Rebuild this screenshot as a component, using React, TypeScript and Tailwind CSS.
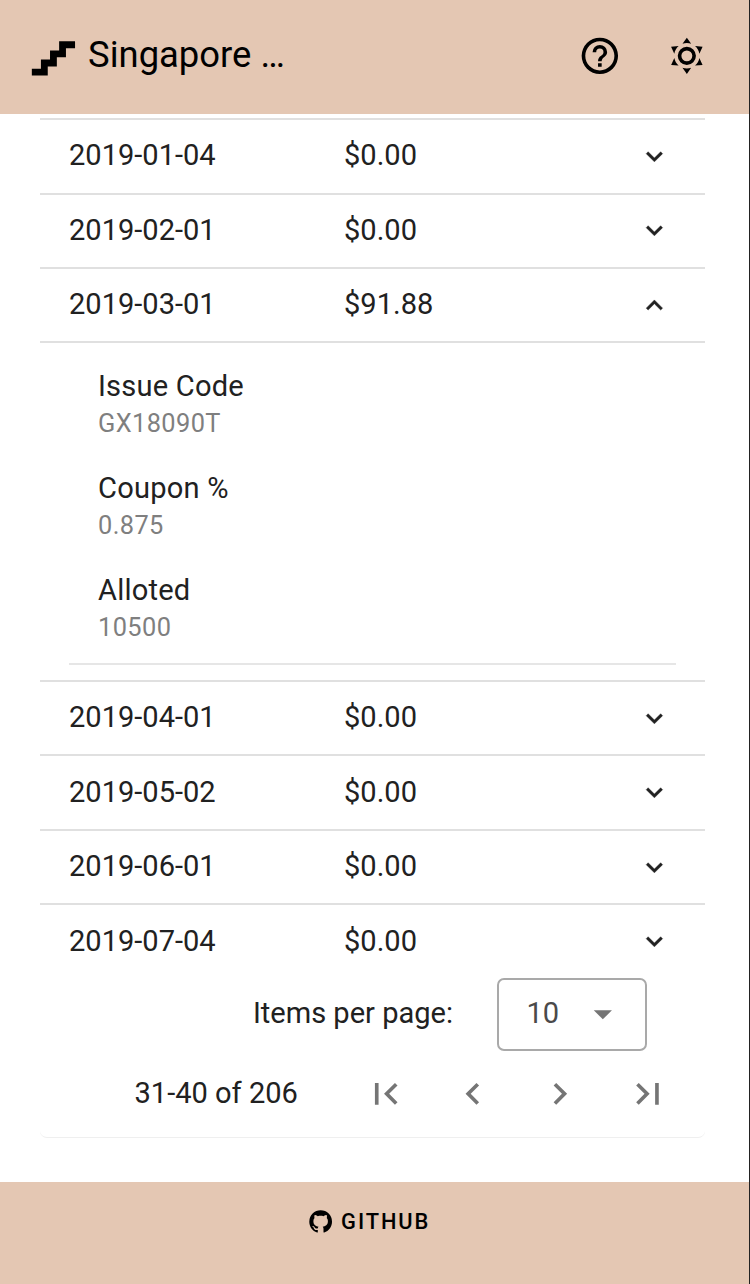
import React from "react";

const icons = {
  stairs: "M15,5V9H11V13H7V17H3V20H10V16H14V12H18V8H22V5H15Z",
  help: "M11,18H13V16H11V18M12,2A10,10 0 0,0 2,12A10,10 0 0,0 12,22A10,10 0 0,0 22,12A10,10 0 0,0 12,2M12,20C7.59,20 4,16.41 4,12C4,7.59 7.59,4 12,4C16.41,4 20,7.59 20,12C20,16.41 16.41,20 12,20M12,6A4,4 0 0,0 8,10H10A2,2 0 0,1 12,8A2,2 0 0,1 14,10C14,12 11,11.75 11,15H13C13,12.75 16,12.5 16,10A4,4 0 0,0 12,6Z",
  sun: "M12,7A5,5 0 0,1 17,12A5,5 0 0,1 12,17A5,5 0 0,1 7,12A5,5 0 0,1 12,7M12,9A3,3 0 0,0 9,12A3,3 0 0,0 12,15A3,3 0 0,0 15,12A3,3 0 0,0 12,9M12,2L14.39,5.42C13.65,5.15 12.84,5 12,5C11.16,5 10.35,5.15 9.61,5.42L12,2M3.34,7L7.5,6.65C6.9,7.16 6.36,7.78 5.94,8.5C5.5,9.24 5.25,10 5.11,10.79L3.34,7M3.36,17L5.12,13.23C5.26,14 5.53,14.78 5.95,15.5C6.37,16.24 6.91,16.86 7.5,17.37L3.36,17M20.65,7L18.88,10.79C18.74,10 18.47,9.23 18.05,8.5C17.63,7.78 17.1,7.15 16.5,6.64L20.65,7M20.64,17L16.5,17.36C17.09,16.85 17.62,16.22 18.04,15.5C18.46,14.77 18.73,14 18.87,13.21L20.64,17M12,22L9.59,18.56C10.33,18.83 11.14,19 12,19C12.82,19 13.63,18.83 14.37,18.56L12,22Z",
  down: "M7.41,8.58L12,13.17L16.59,8.58L18,10L12,16L6,10L7.41,8.58Z",
  up: "M7.41,15.41L12,10.83L16.59,15.41L18,14L12,8L6,14L7.41,15.41Z",
  first: "M18.41,16.59L13.82,12L18.41,7.41L17,6L11,12L17,18L18.41,16.59M6,6H8V18H6V6Z",
  prev: "M15.41,16.58L10.83,12L15.41,7.41L14,6L8,12L14,18L15.41,16.58Z",
  next: "M8.59,16.58L13.17,12L8.59,7.41L10,6L16,12L10,18L8.59,16.58Z",
  last: "M5.59,7.41L10.18,12L5.59,16.59L7,18L13,12L7,6L5.59,7.41M16,6H18V18H16V6Z",
  menu: "M7,10L12,15L17,10H7Z",
  github: "M12,2A10,10 0 0,0 2,12C2,16.42 4.87,20.17 8.84,21.5C9.34,21.58 9.5,21.27 9.5,21C9.5,20.77 9.5,20.14 9.5,19.31C6.73,19.91 6.14,17.97 6.14,17.97C5.68,16.81 5.03,16.5 5.03,16.5C4.12,15.88 5.1,15.9 5.1,15.9C6.1,15.97 6.63,16.93 6.63,16.93C7.5,18.45 8.97,18 9.54,17.76C9.63,17.11 9.89,16.67 10.17,16.42C7.95,16.17 5.62,15.31 5.62,11.5C5.62,10.39 6,9.5 6.65,8.79C6.55,8.54 6.2,7.5 6.75,6.15C6.75,6.15 7.59,5.88 9.5,7.17C10.29,6.95 11.15,6.84 12,6.84C12.85,6.84 13.71,6.95 14.5,7.17C16.41,5.88 17.25,6.15 17.25,6.15C17.8,7.5 17.45,8.54 17.35,8.79C18,9.5 18.38,10.39 18.38,11.5C18.38,15.32 16.04,16.16 13.81,16.41C14.17,16.72 14.5,17.33 14.5,18.26C14.5,19.6 14.5,20.68 14.5,21C14.5,21.27 14.66,21.59 15.17,21.5C19.14,20.16 22,16.42 22,12A10,10 0 0,0 12,2Z",
};

function Icon({ name, className }: { name: keyof typeof icons; className: string }) {
  return (
    <svg viewBox="0 0 24 24" fill="currentColor" className={`shrink-0 ${className}`} aria-hidden="true">
      <path d={icons[name]} />
    </svg>
  );
}

function Row({ date, amount, open, className }: { date: string; amount: string; open?: boolean; className: string }) {
  return (
    <div className={`flex items-center border-t-2 border-[#e0e0e0] pl-[29px] pr-[34.5px] ${className}`}>
      <span className="w-[275px] -mt-[2px]">{date}</span>
      <span className="grow -mt-[2px]">{amount}</span>
      <Icon name={open ? "up" : "down"} className="size-[32.8px] stroke-current stroke-[0.3]" />
    </div>
  );
}

function Detail({ label, value }: { label: string; value: string }) {
  return (
    <div className="h-[102px]">
      <div className="h-[38px] leading-[38px] tracking-[0.22px]">{label}</div>
      <div className="h-[36px] leading-[36px] text-[25.4px] tracking-[0.4px] text-[#7f7f7f]">{value}</div>
    </div>
  );
}

export default function App() {
  return (
    <div className="flex h-[1284px] w-[750px] overflow-hidden bg-white font-['Roboto',sans-serif] text-[29.05px] leading-[36px] text-[#212121]">
      <div className="flex w-[749px] flex-col">
        <header className="flex h-[114px] shrink-0 items-center bg-[#e4c7b3] pl-[25px] pr-[40px] text-black">
          <Icon name="stairs" className="size-[54.6px]" />
          <h1 className="ml-[8.5px] grow -mt-[5px] text-[36.4px] leading-[48px]">Singapore …</h1>
          <Icon name="help" className="mr-[43.5px] size-[43.7px] -mt-[2px]" />
          <Icon name="sun" className="size-[43.7px] -mt-[2px]" />
        </header>

        <main className="ml-[40px] mt-[4px] flex h-[1020px] w-[665px] shrink-0 flex-col rounded-b-[7px] border-b border-[#efefef]">
          <Row date="2019-01-04" amount="$0.00" className="h-[74.5px]" />
          <Row date="2019-02-01" amount="$0.00" className="h-[74.5px]" />
          <Row date="2019-03-01" amount="$91.88" open className="h-[74.4px]" />
          <section className="h-[338.6px] border-t-2 border-[#e0e0e0] px-[29px] pt-[23.6px]">
            <div className="h-[298px] border-b-2 border-[#e6e6e6] pl-[29px]">
              <Detail label="Issue Code" value="GX18090T" />
              <Detail label="Coupon %" value="0.875" />
              <Detail label="Alloted" value="10500" />
            </div>
          </section>
          <Row date="2019-04-01" amount="$0.00" className="h-[74.4px]" />
          <Row date="2019-05-02" amount="$0.00" className="h-[74.6px]" />
          <Row date="2019-06-01" amount="$0.00" className="h-[74.4px]" />
          <Row date="2019-07-04" amount="$0.00" className="h-[74.6px]" />
          <div className="flex h-[73px] items-center justify-end pr-[58px]">
            <span className="mr-[44px] -mt-[2px]">Items per page:</span>
            <div className="flex h-[73px] w-[150px] items-center justify-between rounded-[7px] border-2 border-[#a9a9a9] pl-[27.5px] pr-[20px] text-[#4a4a4a]">
              <span className="-mt-[3px]">10</span>
              <Icon name="menu" className="size-[43.7px] -mt-px text-[#757575]" />
            </div>
          </div>
          <div className="flex h-[86px] items-center pl-[94.5px] text-[#212121]">
            <span className="w-[229px] -mt-[2px]">31-40 of 206</span>
            <div className="flex gap-[43.7px] text-[#757575]">
              <Icon name="first" className="size-[43.7px]" />
              <Icon name="prev" className="size-[43.7px]" />
              <Icon name="next" className="size-[43.7px]" />
              <Icon name="last" className="size-[43.7px]" />
            </div>
          </div>
        </main>

        <footer className="mt-[43.5px] flex grow items-start justify-center bg-[#e4c7b3] pt-[22px] pr-[12px] text-black">
          <a className="flex items-center text-[21.85px] font-medium leading-[36px] tracking-[1.9px]">
            <Icon name="github" className="mr-[7px] size-[27.3px]" />
            GITHUB
          </a>
        </footer>
      </div>
      <div className="w-px bg-[#222]" />
    </div>
  );
}
